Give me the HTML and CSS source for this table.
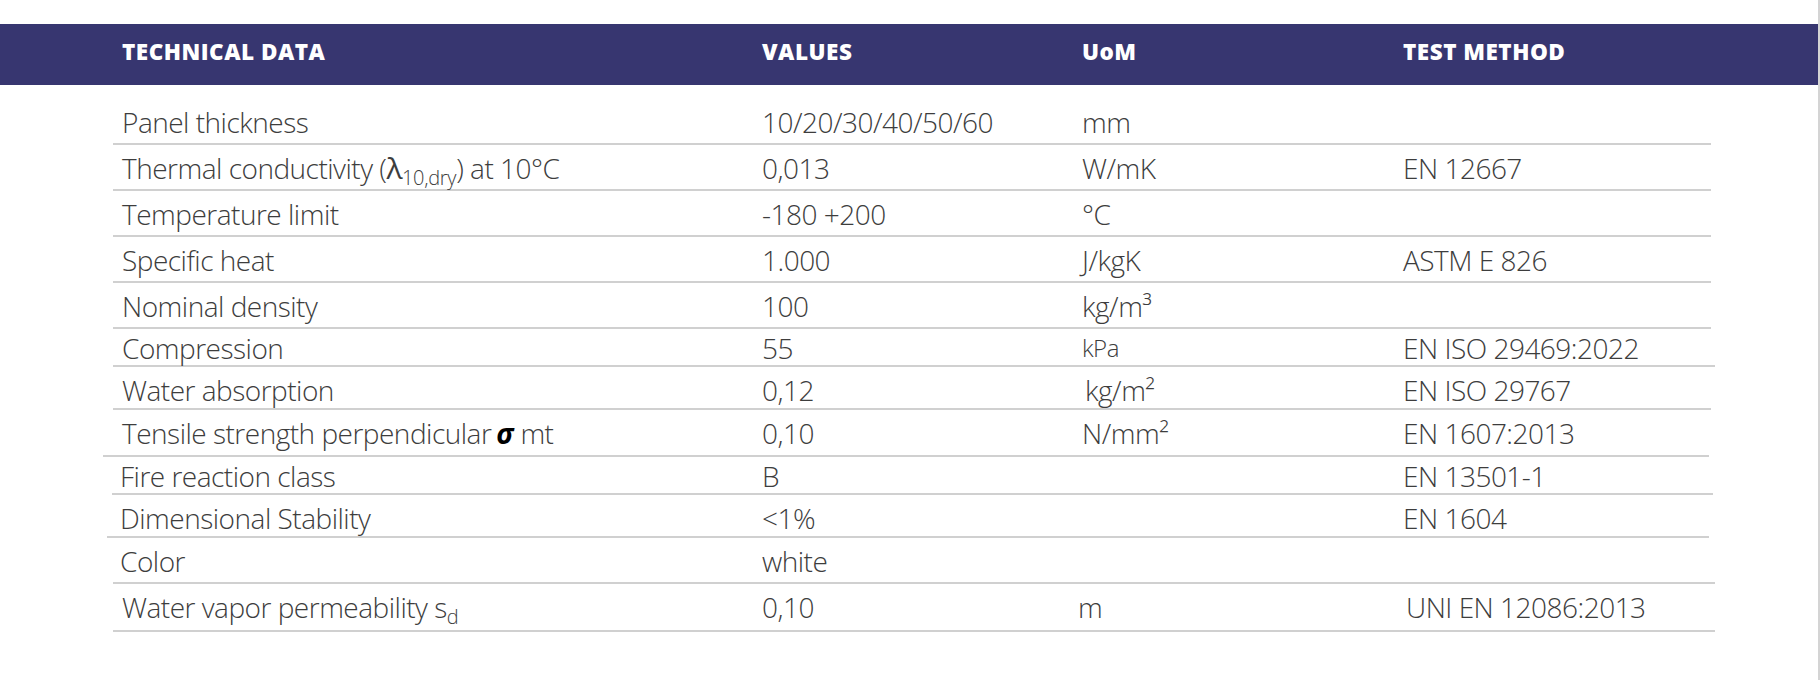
FILE: index.html
```html
<!DOCTYPE html>
<html lang="en">
<head>
<meta charset="utf-8">
<title>Technical data</title>
<link rel="stylesheet" href="styles.css">
</head>
<body>
<div class="page">
  <div class="band">
    <div class="hcell">TECHNICAL DATA</div>
    <div class="hcell">VALUES</div>
    <div class="hcell">UoM</div>
    <div class="hcell">TEST METHOD</div>
  </div>
  <div class="table">
    <div class="row">
      <div class="c c1">Panel thickness</div>
      <div class="c c2">10/20/30/40/50/60</div>
      <div class="c c3">mm</div>
      <div class="c c4"></div>
    </div>
    <div class="row">
      <div class="c c1">Thermal conductivity (<span class="lam">λ</span><sub class="sub">10,dry</sub>) at 10°C</div>
      <div class="c c2">0,013</div>
      <div class="c c3">W/mK</div>
      <div class="c c4">EN 12667</div>
    </div>
    <div class="row">
      <div class="c c1">Temperature limit</div>
      <div class="c c2">-180 +200</div>
      <div class="c c3">°C</div>
      <div class="c c4"></div>
    </div>
    <div class="row">
      <div class="c c1">Specific heat</div>
      <div class="c c2">1.000</div>
      <div class="c c3">J/kgK</div>
      <div class="c c4">ASTM E 826</div>
    </div>
    <div class="row">
      <div class="c c1">Nominal density</div>
      <div class="c c2">100</div>
      <div class="c c3">kg/m³</div>
      <div class="c c4"></div>
    </div>
    <div class="row">
      <div class="c c1">Compression</div>
      <div class="c c2">55</div>
      <div class="c c3 small">kPa</div>
      <div class="c c4">EN ISO 29469:2022</div>
    </div>
    <div class="row">
      <div class="c c1">Water absorption</div>
      <div class="c c2">0,12</div>
      <div class="c c3 shift-r">kg/m²</div>
      <div class="c c4">EN ISO 29767</div>
    </div>
    <div class="row">
      <div class="c c1">Tensile strength perpendicular<span class="sigma">σ</span> mt</div>
      <div class="c c2">0,10</div>
      <div class="c c3">N/mm²</div>
      <div class="c c4">EN 1607:2013</div>
    </div>
    <div class="row">
      <div class="c c1">Fire reaction class</div>
      <div class="c c2">B</div>
      <div class="c c3"></div>
      <div class="c c4">EN 13501-1</div>
    </div>
    <div class="row">
      <div class="c c1">Dimensional Stability</div>
      <div class="c c2">&lt;1%</div>
      <div class="c c3"></div>
      <div class="c c4">EN 1604</div>
    </div>
    <div class="row">
      <div class="c c1">Color</div>
      <div class="c c2">white</div>
      <div class="c c3"></div>
      <div class="c c4"></div>
    </div>
    <div class="row">
      <div class="c c1">Water vapor permeability s<sub class="sub">d</sub></div>
      <div class="c c2">0,10</div>
      <div class="c c3 shift-l">m</div>
      <div class="c c4 shift-r">UNI EN 12086:2013</div>
    </div>
  </div>
</div>
</body>
</html>
```
FILE: styles.css
```css
html, body {
  margin: 0;
  padding: 0;
  background: #ffffff;
}

.page {
  width: 1820px;
  height: 680px;
  box-sizing: border-box;
  padding-top: 24px;
  border-right: 2px solid #d4d4d4;
  overflow: hidden;
}

/* header band */
.band {
  height: 61px;
  box-sizing: border-box;
  background: #373670;
  display: grid;
  grid-template-columns: 640px 320px 321px 1fr;
  padding: 13px 0 0 122px;
  align-items: start;
}

.hcell {
  font-family: "Open Sans", "Noto Sans", sans-serif;
  font-weight: 800;
  font-stretch: 90%;
  font-size: 22.5px;
  letter-spacing: 0.5px;
  line-height: 30px;
  color: #ffffff;
  white-space: nowrap;
}

/* table body */
.table {
  width: 1598px;
  margin: 14px 0 0 113px;
}

.row {
  --l: 0px;
  --r: 0px;
  display: grid;
  grid-template-columns: 649px 320px 321px 1fr;
  height: 46px;
  box-sizing: border-box;
  padding-top: 7px;
  padding-left: var(--l);
  margin-left: calc(-1 * var(--l));
  margin-right: calc(-1 * var(--r));
  border-bottom: 2px solid #d0d0d0;
  align-items: start;
}

.c {
  font-family: "Open Sans", "Noto Sans", sans-serif;
  font-weight: 300;
  font-stretch: 92%;
  font-size: 28px;
  letter-spacing: -0.5px;
  line-height: 32px;
  color: #3d3d3d;
  white-space: nowrap;
}

.c1 { padding-left: 9px; }

.small { font-size: 24px; }
.shift-r { padding-left: 3px; }
.shift-l { margin-left: -4px; }

.sub {
  font-size: 20px;
  vertical-align: -6px;
  line-height: 0;
  letter-spacing: -0.3px;
}

.lam {
  font-weight: 400;
  font-size: 30px;
}

.sigma {
  font-weight: 700;
  font-style: italic;
  color: #000000;
  margin-left: 5px;
  letter-spacing: 0;
}

/* individual row geometry, following the source document */
.row:nth-child(6) { height: 38px; padding-top: 3px; --r: 4px; }
.row:nth-child(7) { height: 43px; }
.row:nth-child(8) { height: 47px; --l: 10px; --r: -2px; }
.row:nth-child(9) { height: 38px; padding-top: 3px; --l: 1px; --r: 2px; }
.row:nth-child(10) { height: 43px; --l: 6px; --r: -2px; }
.row:nth-child(11) { height: 46px; --r: 4px; }
.row:nth-child(12) { height: 48px; --r: 4px; }

.row:nth-child(9) .c1,
.row:nth-child(10) .c1,
.row:nth-child(11) .c1 { padding-left: 7px; }
```
